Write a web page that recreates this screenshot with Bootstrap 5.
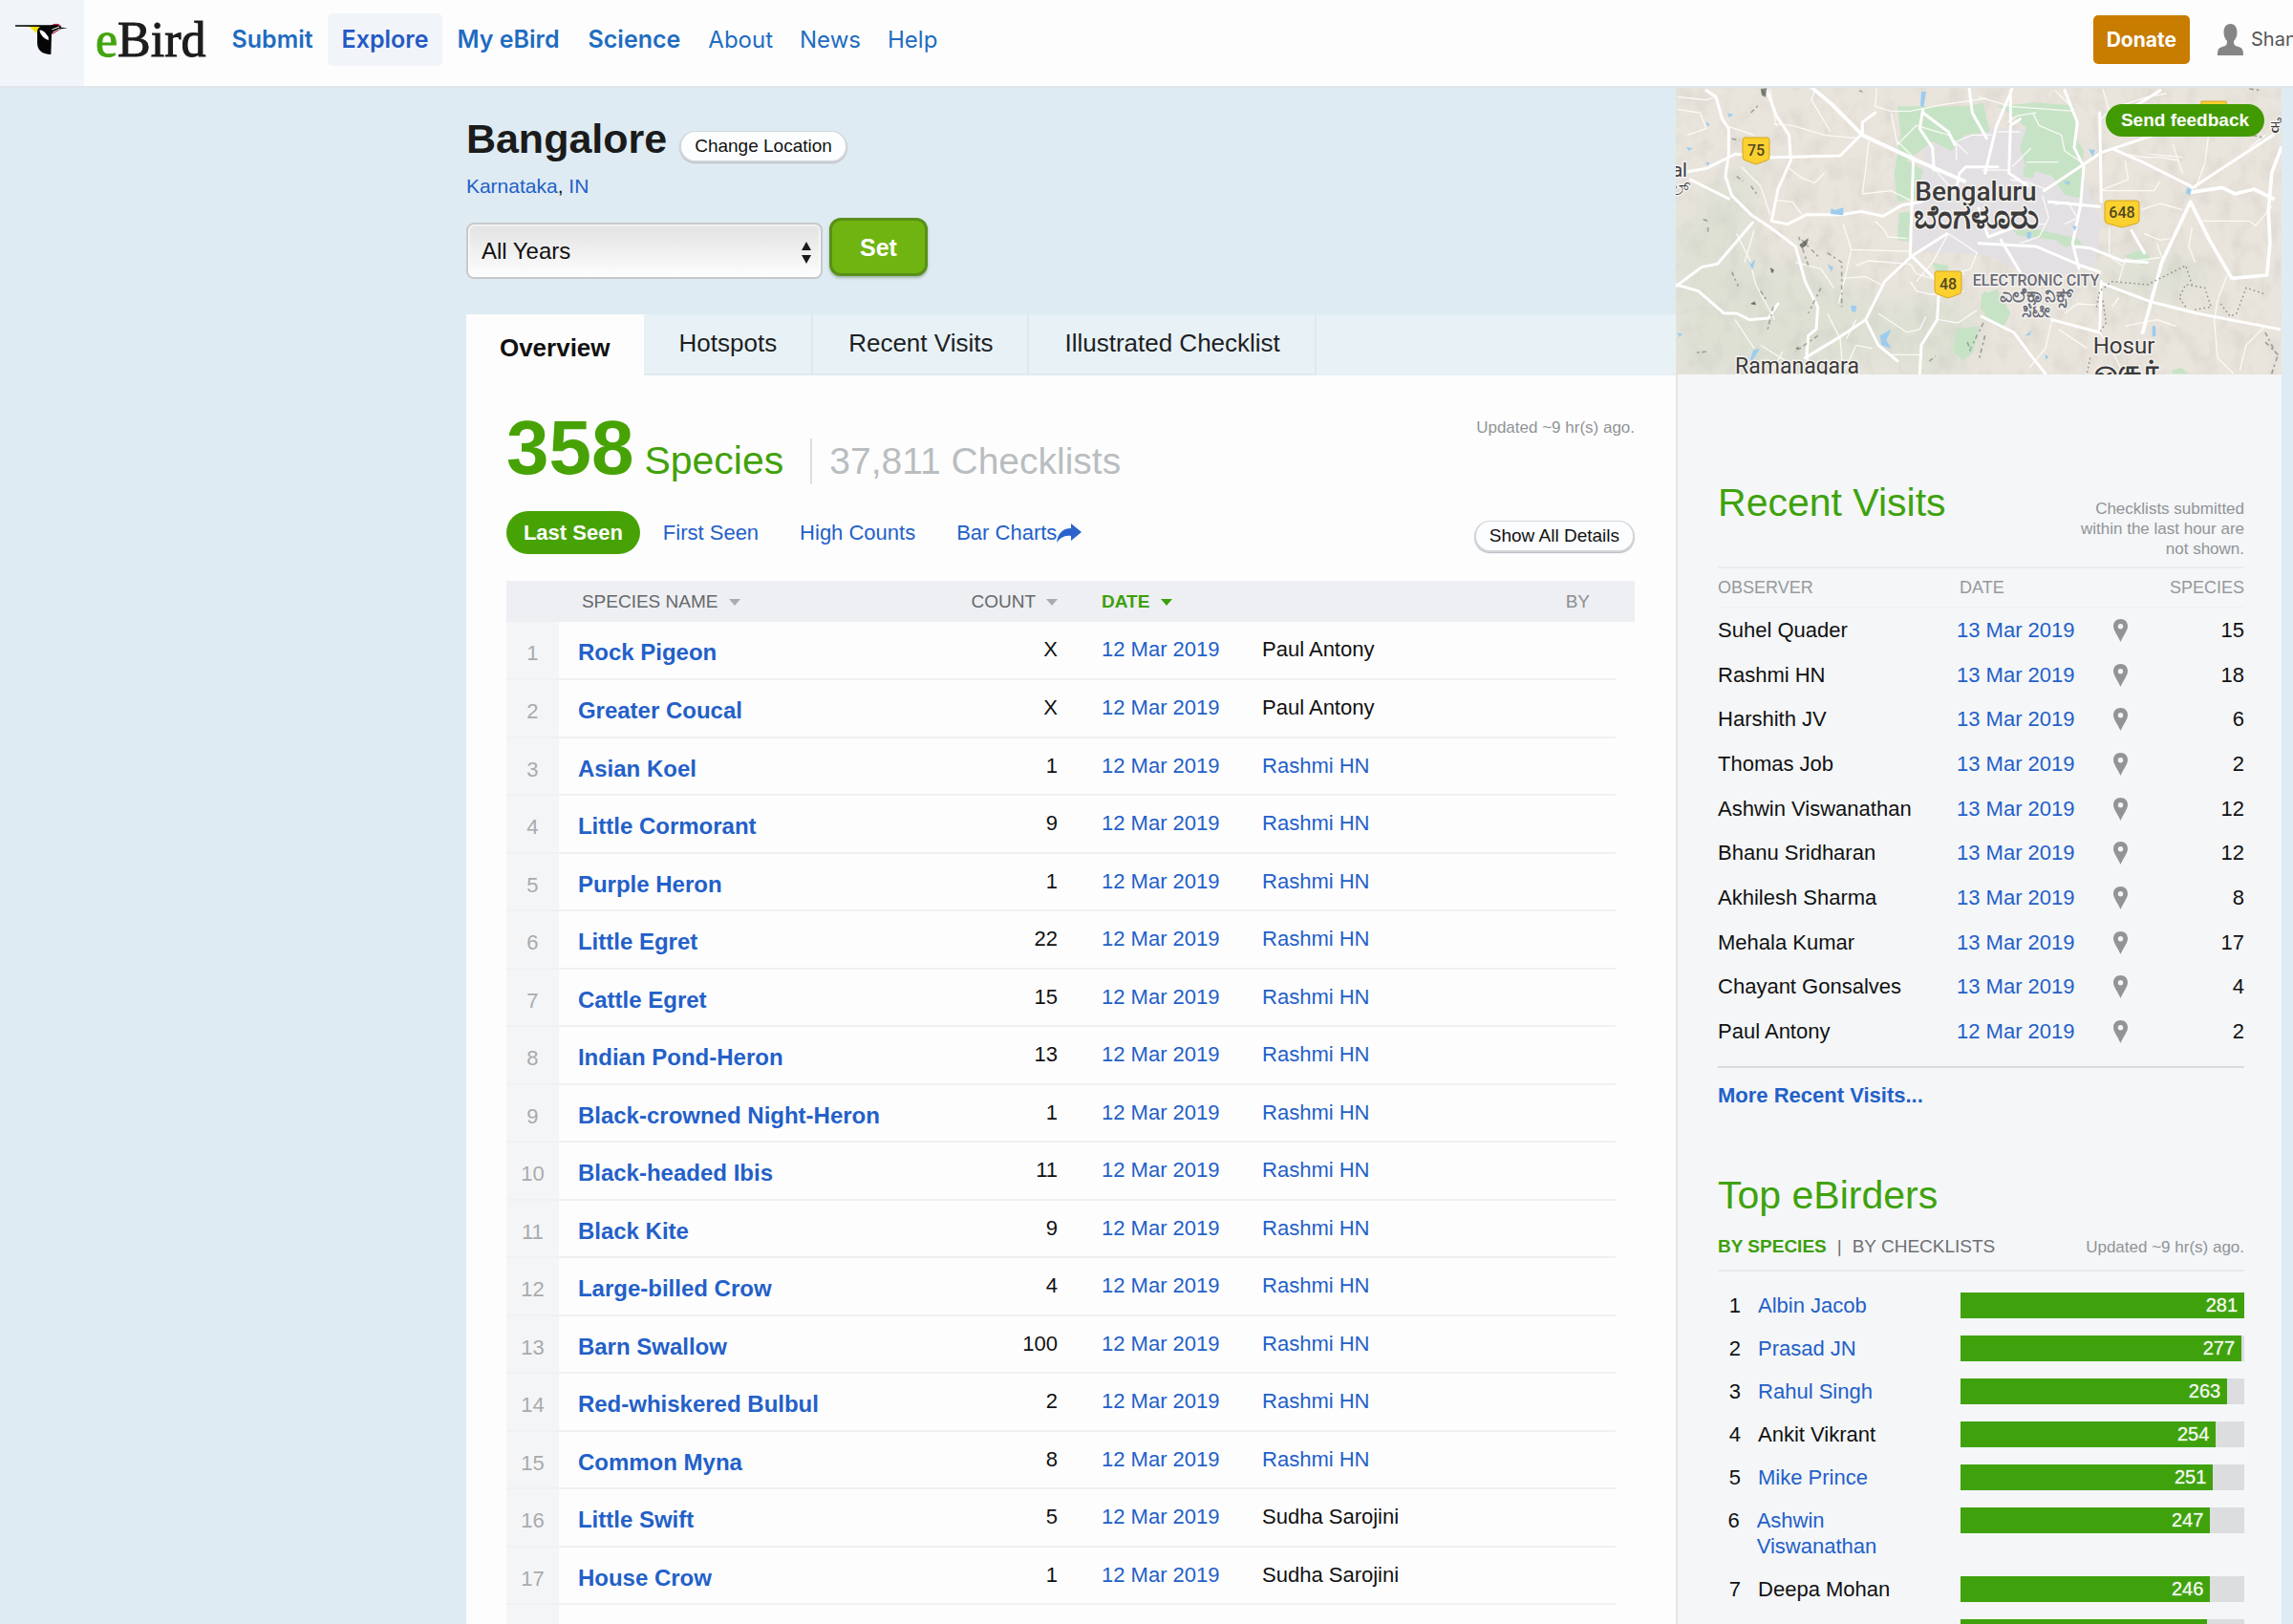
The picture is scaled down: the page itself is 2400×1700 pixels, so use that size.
<!DOCTYPE html>
<html lang="en">
<head>
<meta charset="utf-8">
<meta name="viewport" content="width=device-width, initial-scale=1">
<title>Bangalore - eBird</title>
<link href="https://cdn.jsdelivr.net/npm/bootstrap@5.3.0/dist/css/bootstrap.min.css" rel="stylesheet">
<style>
  body { font-family: "Liberation Sans", Arial, sans-serif; font-size: 22px; line-height: 26px; color: #111; background: #deebf3; height: 100vh; overflow: hidden; }
  a { color: #2360c8; text-decoration: none; }
  a:hover { text-decoration: underline; }

  /* header */
  .site-head { background: #fdfdfe; border-bottom: 2px solid #dfe7ec; font-family: Inter, sans-serif; }
  .lab-logo { width: 88px; background: #f1f4f9; }
  .brand-word { font-family: "Liberation Serif", serif; font-size: 52px; line-height: 55px; color: #1c1c1c; padding: 14px 12px 0 12px; -webkit-text-stroke: 1px currentColor; }
  .brand-word span { color: #43a50e; }
  .main-nav { padding: 14px 0 21px; }
  .main-nav a { font-size: 24px; line-height: 55px; padding: 0 14px; color: #1f6cc0; border-radius: 5px; }
  .main-nav a.strong { font-size: 25px; font-weight: 600; padding: 0 15px; }
  .main-nav a.current { background: #f1f4f9; color: #2459c4; }
  .donate { font-size: 21px; font-weight: 700; line-height: 51px; padding: 0 14px; background: #c87c00; color: #fff; border: 0; border-radius: 5px; margin-top: 16px; }
  .account { width: 79px; margin: 14px 0 0 29px; font-size: 20px; line-height: 55px; color: #555; }

  /* place heading */
  .page-pad { padding: 0 12px 0 20.33%; }
  .place { padding-top: 28px; }
  .place h1 { font-size: 43px; line-height: 50px; font-weight: 700; color: #1b1b1b; margin: 0 13px 0 0; }
  .soft-btn { font-size: 19px; line-height: 30px; padding: 0 14px; color: #111; background: #fcfdfe; border: 2px solid #d3d7da; border-top-width: 1px; border-radius: 17px; box-shadow: 0 1px 1px #b4bac0; }
  .region { font-size: 21px; line-height: 24px; margin-top: 13px; }
  .year-form { gap: 7px; margin: 21px 0 37px; }
  .year-select { width: 373px; height: 59px; margin-top: 5px; font-size: 24px; padding: 0 14px; color: #111; appearance: none; border: 2px solid #c6cacc; border-radius: 8px; background: linear-gradient(#e2e2e2, #fdfdfd); box-shadow: inset 0 0 3px 1px #fff; }
  .year-arrows { right: 11px; top: 25px; pointer-events: none; }
  .set-btn { width: 103px; height: 61px; font-size: 25px; font-weight: 700; color: #fff; background: #70b411; border: 3px solid #58901a; border-radius: 12px; box-shadow: 0 2px 3px #a3b3a8; }
  .place-tabs { background: #e8f2f6; font-size: 26px; line-height: 60px; }
  .place-tabs a { color: #1d2023; padding: 0 36px 0 37px; border-right: 2px solid #dde9ef; border-bottom: 2px solid #e0eaef; }
  .place-tabs a.current { background: #fdfdfe; color: #111; font-weight: 700; line-height: 58px; padding: 6px 33px 0 35px; margin-bottom: -2px; border-color: #fdfdfe; }

  /* overview panel */
  .panel { background: #fdfdfe; padding: 36px 43px 0 42px; }
  .big-num { font-size: 80px; line-height: 80px; font-weight: 700; color: #47a305; }
  .big-label { font-size: 41px; line-height: 48px; color: #42a10a; margin-left: 11px; }
  .checklists { font-size: 39px; line-height: 48px; color: #b9bdbf; border-left: 2px solid #dcdfe1; margin-left: 28px; padding-left: 18px; }
  .fine { font-size: 17px; line-height: 21px; color: #919496; }
  .views { margin-top: 26px; line-height: 45px; }
  .views a { margin-right: 43px; }
  .views a.current { background: #47a305; color: #fff; font-weight: 700; border-radius: 23px; padding: 0 18px; margin-right: 24px; }
  .views .soft-btn { margin-bottom: 2px; }
  .species-table { table-layout: fixed; margin-top: 28px; border-collapse: collapse; width: 100%; }
  .species-table th { font-size: 19px; line-height: 43px; font-weight: 400; color: #65686b; background: #eeeff2; padding: 0; white-space: nowrap; }
  .species-table tbody tr { height: 60px; }
  .species-table tbody tr:nth-child(even) { height: 61px; }
  .species-table td { vertical-align: top; padding: 16px 0 0; border-bottom: 2px solid #eff0f1; white-space: nowrap; }
  .species-table td:last-child { border: 0; }
  .species-table td.rank { padding-top: 20px; text-align: center; color: #a8abad; background: #f4f5f7; border-color: #f0f1f3; }
  .species-table td.bird { padding: 18px 0 0 20px; font-size: 24px; line-height: 28px; font-weight: 700; }
  .species-table .when { padding-left: 46px; }
  .species-table .who { padding-left: 18px; }
  .species-table th.by { padding-right: 27px; color: #8b8e91; text-align: right; }
  th.sorted { color: #3c9f0c !important; font-weight: 700 !important; }
  .caret { display: inline-block; border: 6px solid transparent; border-top: 7px solid #a9acaf; border-bottom: 0; vertical-align: middle; margin-left: 6px; }
  .sorted .caret { border-top-color: #3c9f0c; }

  /* sidebar */
  .side { width: 634px; background: #f4f6f8; }
  .map-view { height: 300px; overflow: hidden; }
  .map-view svg { width: 100%; height: 100%; }
  .feedback { top: 17px; right: 18px; font-size: 19px; line-height: 34px; font-weight: 700; color: #fff; background: #429a02; border: 0; border-radius: 17px; padding: 0 16px; }
  .side-body { border-left: 2px solid #e3e6e9; padding: 110px 39px 0 42px; }
  .side-body h2 { font-size: 41px; line-height: 48px; font-weight: 400; color: #3fa20d; margin: 0; }
  .note { width: 190px; margin-top: 20px; padding-bottom: 8px; }
  .visits { table-layout: fixed; width: 100%; border-top: 2px solid #eaecee; }
  .visits th { font-size: 18px; line-height: 40px; font-weight: 400; color: #96999b; padding: 0; border-bottom: 2px solid #f0f2f4; }
  .visits th.day { padding-left: 3px; }
  .visits td { padding: 0; line-height: 26px; height: 47px; white-space: nowrap; }
  .visits tr:nth-child(3n) td { height: 46px; }
  .more { margin-top: 13px; border-top: 2px solid #d9dcde; padding: 16px 0 67px; }
  .rank-tabs { font-size: 19px; line-height: 24px; margin-top: 18px; padding-bottom: 12px; border-bottom: 2px solid #e8eaec; }
  .rank-tabs a { color: #6d7072; }
  .rank-tabs a.current { color: #3c9f0c; font-weight: 700; }
  .rank-tabs .bar-sep { padding: 0 11px; color: #6d7072; }
  .ranking { margin-top: 22px; line-height: 27px; }
  .ranking li { margin-bottom: 18px; }
  .ranking .pos { width: 24px; margin-right: 18px; }
  .ranking .person { padding-right: 22px; }
  .meter { flex: 0 0 54%; height: 27px; background: #dcdddf; }
  .meter div { height: 27px; background: #3fa20d; color: #fff; font-size: 20px; padding-right: 7px; text-align: right; -webkit-text-stroke: 1px #e4f3dc55; }
</style>
</head>
<body>
<header class="site-head d-flex align-items-start">
  <a class="lab-logo align-self-stretch" href="#" aria-label="Cornell Lab">
    <svg width="88" height="90" viewBox="0 0 264 270">
      <path d="M92 84 L126 84 L116 104 Z" fill="#f3e400"/>
      <path d="M48 79 L160 79 Q182 72 192 86 L212 88 L192 91 L162 106 L160 171 Q118 170 117 135 L117 100 Q118 86 128 84 L48 83 Z" fill="#050505"/>
      <path d="M124 95 Q136 92 152 116 L152 127 Q128 116 124 95 Z" fill="#fff"/>
      <path d="M163 93 L186 84 M166 102 L188 90" stroke="#fff" stroke-width="3"/>
      <path d="M166 78 Q186 72 192 84 M164 107 L184 94" fill="none" stroke="#c4122f" stroke-width="3"/>
    </svg>
  </a>
  <a class="brand-word text-decoration-none" href="#"><span>e</span>Bird</a>
  <nav class="main-nav d-flex">
    <a class="strong" href="#">Submit</a>
    <a class="strong current" href="#">Explore</a>
    <a class="strong" href="#">My eBird</a>
    <a class="strong" href="#">Science</a>
    <a href="#">About</a>
    <a href="#">News</a>
    <a href="#">Help</a>
  </nav>
  <button class="donate ms-auto" type="button">Donate</button>
  <a class="account d-flex align-items-center flex-shrink-0 overflow-hidden" href="#">
    <svg class="flex-shrink-0 me-2" width="27" height="35" viewBox="0 0 27 35"><path d="M13.500 1c5 0 7 4 7 9 0 4-1.500 7-3.500 9 0 4 1 5 5 6 4 1 5 3 5 9H0c0-6 1-8 5-9s5-2 5-6c-2-2-3.500-5-3.500-9 0-5 2-9 7-9z" fill="#858585"/></svg>
    Shan
  </a>
</header>

<div class="page-pad d-flex align-items-stretch">
  <main class="flex-grow-1">
    <div class="place">
      <div class="d-flex align-items-end">
        <h1>Bangalore</h1>
        <button class="soft-btn" type="button">Change Location</button>
      </div>
      <div class="region"><a href="#">Karnataka</a>, <a href="#">IN</a></div>
      <form class="year-form d-flex align-items-start">
        <div class="position-relative">
          <select class="year-select" aria-label="Years"><option>All Years</option></select>
          <svg class="year-arrows position-absolute" width="12" height="23" viewBox="0 0 12 23"><path d="M6 0l5 9H1zM6 23l5-9H1z" fill="#1b1b1b"/></svg>
        </div>
        <button class="set-btn" type="button">Set</button>
      </form>
    </div>
    <nav class="place-tabs d-flex">
      <a class="current" href="#">Overview</a>
      <a href="#">Hotspots</a>
      <a href="#">Recent Visits</a>
      <a href="#">Illustrated Checklist</a>
    </nav>
    <section class="panel">
      <div class="d-flex align-items-baseline">
        <span class="big-num">358</span>
        <span class="big-label">Species</span>
        <span class="checklists">37,811 Checklists</span>
        <span class="fine ms-auto align-self-start mt-2">Updated ~9 hr(s) ago.</span>
      </div>
      <div class="views d-flex align-items-end">
        <a class="current" href="#">Last Seen</a>
        <a href="#">First Seen</a>
        <a href="#">High Counts</a>
        <a href="#" class="d-flex align-items-center">Bar Charts<svg width="26" height="20" viewBox="0 0 26 20"><path d="M15 0l11 9-11 9v-5C8 12 4 15 0 20 1 11 6 5 15 5z" fill="#2a63cb"/></svg></a>
        <button class="soft-btn ms-auto" type="button">Show All Details</button>
      </div>
      <table class="species-table">
        <colgroup><col style="width:55px"><col><col style="width:120px"><col style="width:196px"><col style="width:388px"><col style="width:20px"></colgroup>
        <thead>
          <tr><th></th><th class="ps-4">SPECIES NAME <span class="caret"></span></th><th class="text-end">COUNT <span class="caret"></span></th><th class="when sorted">DATE <span class="caret"></span></th><th class="by">BY</th><th></th></tr>
        </thead>
        <tbody id="species"></tbody>
      </table>
    </section>
  </main>

  <aside class="side flex-shrink-0">
    <div class="map-view position-relative">
      <svg viewBox="0 1 634 300" preserveAspectRatio="xMidYMid slice" role="img" aria-label="Map of Bengaluru">
        <defs>
          <filter id="relief" x="0" y="0" width="100%" height="100%">
            <feTurbulence type="fractalNoise" baseFrequency=".06 .04" numOctaves="4" seed="8"/>
            <feColorMatrix values="0 0 0 0 .35  0 0 0 0 .38  0 0 0 0 .35  1.600 0 0 0 -.72"/>
          </filter>
          <filter id="soften"><feGaussianBlur stdDeviation="14"/></filter>
        </defs>
        <rect width="634" height="302" fill="#e9e4dc"/>
        <g filter="url(#soften)" fill="#dee0d4"><path d="M0 150L90 60 70 180 170 200 230 240 180 302H0z"/><ellipse cx="260" cy="260" rx="60" ry="40"/><ellipse cx="500" cy="200" rx="60" ry="20"/></g>
        <rect width="634" height="302" filter="url(#relief)" opacity=".22"/>
        <!-- western half, drawn on a grid of three units to the pixel -->
        <g transform="translate(-8 -3) scale(.3333)">
          <path d="M800 200l170-60h250l80 140 60 150-20 140-170 50-160-80-240-20-10-120 50-160z" fill="#e2e0e3"/>
          <g fill="#c7e3c6">
            <path d="M720 70h210l60-10 20 90-80 10-40 50-60-30-80 60 50 30-20 90-60 10-10-90 20-120z"/>
            <path d="M725 405l35-5-5 95-35-5zM905 770l70-10-15 80-35 30-30-30zM830 560l50 10v40l-40-20zM990 650l60 20 25 50-20 40-60-30z"/>
          </g>
          <g fill="none" stroke="#fffefb" stroke-width="4" opacity=".85" stroke-linejoin="round">
            <path d="M30 40l90 10 30-10M30 80l70 10 20 50-60 20M330 125l60 5 100 30 100 10M510 150l-60-100 10-30M320 15l20 120M655 10l-5 60 50 15h60l100-20 140-20"/>
            <path d="M180 130l90 30M230 260l60 60 30 90M380 265l40 30 40 15 30-30M630 180l-10 90-10 75 90-10 60 30M700 90l20 100 60-60 100 30 60 60M780 240l-60-60M340 365l50 5 30 40"/>
            <path d="M215 470l40 80 20 80 60 110M240 560l30-100M400 560l80 20 40 60M570 520l190 5M590 570l40-15 130 10 20 30 60 20 90-20M550 610l70-5 50 25M500 720l40 80 10 110M660 720l90 60 40-10 20-40M640 830l-50-10-40 90M590 740l-30 60"/>
            <path d="M760 620l20 30 40 10 30 0 80-10M650 430l30 30 10 20 60 5M550 440l25 80-20 90-20 80M850 740l60 10 60-40M690 850h110M360 840l-40 70M290 820l80 50M210 740l60 90"/>
            <path d="M905 240v-60l50-20h60M880 470l-50 90-50 60M880 470l90 60-20 50-60 20M830 260l80 90"/>
          </g>
          <g fill="none" stroke="#fff" stroke-width="9" stroke-linejoin="round" stroke-linecap="round">
            <path d="M120 20l30 20 20 70 20 30v80l-10 70 20 60 60 60 60 40 80 60 30 110 40 80-5 70-25 20-5 60 10 60"/>
            <path d="M310 20l30 80 40 60 5 80-40 90-20 100 50 10 60-30h110l60-10 70 15 60-35 60-10"/>
            <path d="M60 275l60-10 90-45 120 10 210-5 30-30 40-40V120l40-30"/>
            <path d="M450 10l60 50 100 100 160 75 160 70" stroke-width="12"/>
            <path d="M25 635l80-60 50-10 110-130M25 630l70 20 80 70h40l40 20 60-5 30-45M430 860l100-60 90-60 60-120 85-80 110-70M620 740l40 80 60 50M765 540l70 70M850 650l-5 90-50 80-5 90"/>
            <path d="M770 240l-10 300M800 80l-10 60 40 60 5 70M800 90l80 60 20 40M945 10l10 80 45 80M70 300l120 60M905 330l10-50 20-20h100"/>
          </g>
          <g fill="#9bccf0"><path d="M795 25l15-2-8 50-10-5zM512 390l12 6 26-8v24l-40-4zM665 790l35-20-15 35 15 25-30-10zM250 550l10 15 14-15-10 35zM268 835l20-4-25 40-5-8zM500 565l18 10-5 15zM574 695l18 2-4 20-12-4zM30 780l15 5-10 10zM186 92l18 2-12 12zM118 116l14 12-10 4zM58 198l20 4-14 8zM118 246h12l-6 12z"/></g>
          <g fill="none" stroke="#555b52" stroke-width="5" stroke-dasharray="14 9 7 12" opacity=".45"><path d="M295 20l10 20M260 90l25-25M215 290l20 15M260 320l25 35M110 425l15 5M125 450v20M420 490l20 20 40 40M425 510l15-20M500 530l45 30v140M480 640l-40 80M325 580l5 15M200 590l20 45M262 690h12M330 700l-20 80M290 650l20 30M470 790l-70 50M940 810l10 30M990 750l-40 80M440 570l-30-90M120 840l-40 5M820 870l20-15M600 20l10 5M200 172l24 4"/></g>
          <g fill="#3f443d" opacity=".6"><path d="M290 15l20-2-4 28-12-6zM412 505l28-22-4 22-16 12zM320 575l14 10-10 8zM258 690l14-8 4 12zM400 830l10-6v12z"/></g>
        </g>
        <!-- eastern half, same grid -->
        <g transform="translate(317 -3) scale(.3333)">
          <g fill="#c7e3c6"><path d="M60 70l120-12 120 10 10 110 20 30-10 150-50-10-40-60-80-20-20-70 20-60-60-50zM140 260l40 5-10 30-30-5zM110 460l70-5 130 30 20 20-60 5-30-20-120-15zM455 540l60-20 25 25-25 25-30-20zM10 660l50-15 20 80-30 20-45-40zM605 900l30-10 25 20h-50z"/></g>
          <g fill="none" stroke="#fffefb" stroke-width="4" opacity=".85" stroke-linejoin="round">
            <path d="M0 40l100 30 200 15M300 80l-60-60M170 90l20 40 70 30 10 50 60 40M165 200l-60 60M390 15l20 70-30 30M410 80l120-40 60-10M460 240l10 60-90 35h170l20-30M540 220l100 10"/>
            <path d="M460 220l60 10 50 0 60 10M240 380l40-10 30 50-40 20M700 430h150l20 15 50-60M520 470l50 20 30-5M510 395l60-20 70 20M680 330l30-80 20-150M640 280l-30-90M780 600l-30 80-10 60 10 120 50 50M680 560l-20-50 10-60"/>
            <path d="M440 620l20-70 30 5 80-10M410 450v90l40 30M230 740l-20 90-50 60M270 720l40-30 70 5M420 700l20-30M460 760l100-20 60 20M250 770l90 60M380 780l40 60 30 60M900 760l-60 60-20 80M560 500l20 60M850 200l50-40"/>
            <path d="M90 120l30-20 60-10M60 150h70M100 300l60 10 50 20M80 440h130M200 350l20 70-30 60-60 20M10 270h90M150 245h100"/>
          </g>
          <g fill="none" stroke="#fff" stroke-width="9" stroke-linejoin="round" stroke-linecap="round">
            <path d="M205 335l180-120 240-80 50-60M425 205l90 40 150 75M105 15l-50 120L20 280M100 20l0 100M270 20l40 100-10 80 30 60-10 120-25 120 20 80M380 90l5 280M0 500l180 10 140 60 60 20M300 510l50 5 100 40 80 5M430 90l60-20 80-50M220 370l160 15"/>
            <path d="M665 340l100-15 40 20 60-15 60 30M665 370l60 120 70 120 110-10 10-100-5-100 10-120 30-80M665 370l-90 190-60 220" stroke-width="11"/>
            <path d="M385 625l160 60 140 35 260 50M10 730l100 50 60 80 40 50M230 740l150 40 5-160M70 490l60 100M480 460l40 70M665 330l260-170M0 390l30 90 80-30M130 110l-30 20-5 150 60 40"/>
          </g>
          <g fill="#9bccf0"><path d="M345 205l20 2-6 22zM265 305h20v14zM655 325l14 5-6 20-12-8zM152 465h14l-4 22-10-4zM294 445l14 2-6 14zM545 760h10l2 30-12 4zM145 790l22-15-8 15zM208 850l12 6-8 10zM262 700l16-10-8 14z"/></g>
          <path d="M370 700l10-50 40-30 110 10 60-30 60-30 20 60M650 700l-20-30 20-40 60 10 20 60-60 10M760 690l30 40 20-10 30-80 60 20M390 680l10 70-20 30M350 860l-10 50" fill="none" stroke="#8d8a86" stroke-width="4" stroke-dasharray="5 9"/>
          <path d="M860 160l40 10M850 15l30 4M940 850l-40-40M920 910l20-60M20 790l-20 80M900 780l30 60" fill="none" stroke="#555b52" stroke-width="5" stroke-dasharray="14 9 7 12" opacity=".5"/>
        </g>
        <g fill="#fbd12f" stroke="#d8a51f"><path d="M72 53h24q2 0 2 3v17q0 3-3 4l-11 4-11-4q-3-1-3-4V56q0-3 2-3z"/><path d="M273 193h24q2 0 2 3v17q0 3-3 4l-11 4-11-4q-3-1-3-4v-17q0-3 2-3z"/><path d="M452 119h30q3 0 3 3v17q0 3-3 4l-15 4-15-4q-3-1-3-4v-17q0-3 3-3z"/><path d="M550 15h26v20h-26z"/></g>
        <g font-family="Roboto, sans-serif" text-anchor="middle" fill="#3b3b3b">
          <g font-size="16" font-weight="500" fill="#504823"><text x="84" y="72">75</text><text x="285" y="212">48</text><text x="467" y="137">648</text></g>
          <g stroke="#f4f1ee" stroke-width="3" paint-order="stroke">
            <text x="314" y="119" font-size="28" font-weight="500">Bengaluru</text>
            <text x="314" y="148" font-size="35" font-weight="700">ಬೆಂಗಳೂರು</text>
            <text x="377" y="208" font-size="16" font-weight="500" fill="#686b76">ELECTRONIC CITY</text>
            <text x="377" y="225" font-size="21" font-weight="700" fill="#686b76">ಎಲೆಕ್ಟ್ರಾನಿಕ್ಸ್</text>
            <text x="377" y="241" font-size="20" font-weight="700" fill="#686b76">ಸಿಟೀ</text>
            <text x="127" y="300" font-size="23">Ramanagara</text>
            <text x="469" y="279" font-size="24">Hosur</text>
            <text x="471" y="307" font-size="29" font-weight="700">ஓசூர்</text>
            <text x="4" y="94" font-size="20">al</text>
            <text x="4" y="113" font-size="22">ಲ್</text>
            <text x="628" y="48" font-size="24">ಕೆ</text>
          </g>
        </g>
      </svg>
      <button class="feedback position-absolute" type="button">Send feedback</button>
    </div>
    <div class="side-body">
      <div class="d-flex justify-content-between align-items-start">
        <h2>Recent Visits</h2>
        <div class="fine note text-end">Checklists submitted within the last hour are not shown.</div>
      </div>
      <table class="visits">
        <colgroup><col style="width:250px"><col style="width:148px"><col style="width:44px"><col></colgroup>
        <thead><tr><th>OBSERVER</th><th class="day">DATE</th><th></th><th class="text-end">SPECIES</th></tr></thead>
        <tbody id="visits"></tbody>
      </table>
      <div class="more"><a class="fw-bold" href="#">More Recent Visits...</a></div>
      <h2>Top eBirders</h2>
      <div class="rank-tabs d-flex align-items-center">
        <a class="current" href="#">BY SPECIES</a><span class="bar-sep">|</span><a href="#">BY CHECKLISTS</a>
        <span class="fine ms-auto">Updated ~9 hr(s) ago.</span>
      </div>
      <ol class="ranking list-unstyled" id="ranking"></ol>
    </div>
  </aside>
</div>

<script>
  const species = [
    ["Rock Pigeon", "X", "Paul Antony"], ["Greater Coucal", "X", "Paul Antony"],
    ["Asian Koel", 1], ["Little Cormorant", 9], ["Purple Heron", 1], ["Little Egret", 22],
    ["Cattle Egret", 15], ["Indian Pond-Heron", 13], ["Black-crowned Night-Heron", 1],
    ["Black-headed Ibis", 11], ["Black Kite", 9], ["Large-billed Crow", 4], ["Barn Swallow", 100],
    ["Red-whiskered Bulbul", 2], ["Common Myna", 8],
    ["Little Swift", 5, "Sudha Sarojini"], ["House Crow", 1, "Sudha Sarojini"], ["House Sparrow", 2, "Sudha Sarojini"]
  ];
  document.getElementById("species").innerHTML = species.map(([name, count, by], i) =>
    `<tr><td class="rank">${i + 1}</td><td class="bird"><a href="#">${name}</a></td><td class="text-end">${count}</td>` +
    `<td class="when"><a href="#">12 Mar 2019</a></td><td class="who">${by || '<a href="#">Rashmi HN</a>'}</td><td></td></tr>`).join("");

  const visits = [["Suhel Quader", 15], ["Rashmi HN", 18], ["Harshith JV", 6], ["Thomas Job", 2],
    ["Ashwin Viswanathan", 12], ["Bhanu Sridharan", 12], ["Akhilesh Sharma", 8], ["Mehala Kumar", 17],
    ["Chayant Gonsalves", 4], ["Paul Antony", 2, 12]];
  const pin = '<svg class="d-block" width="15" height="24" viewBox="0 0 15 24"><path fill-rule="evenodd" d="M7.500 0C12 0 15 3 15 7.500 15 12 10 18 7.500 24 5 18 0 12 0 7.500 0 3 3 0 7.500 0zm0 5a2.700 2.700 0 1 0 0 5.400 2.700 2.700 0 0 0 0-5.400z" fill="#929496"/></svg>';
  document.getElementById("visits").innerHTML = visits.map(([name, n, day]) =>
    `<tr><td>${name}</td><td><a href="#">${day || 13} Mar 2019</a></td><td><a href="#" class="d-block ms-3" aria-label="Map">${pin}</a></td><td class="text-end">${n}</td></tr>`).join("");

  const ranking = [["Albin Jacob", 281, 100, 1], ["Prasad JN", 277, 99, 1], ["Rahul Singh", 263, 94, 1],
    ["Ankit Vikrant", 254, 90, 0], ["Mike Prince", 251, 89, 1], ["Ashwin Viswanathan", 247, 88, 1],
    ["Deepa Mohan", 246, 88, 0], ["Prem Rachel", 244, 87, 1]];
  document.getElementById("ranking").innerHTML = ranking.map(([name, n, pct, link], i) =>
    `<li class="d-flex align-items-start"><span class="pos text-end">${i + 1}</span>` +
    `<span class="person flex-grow-1">${link ? `<a href="#">${name}</a>` : name}</span>` +
    `<div class="meter"><div style="width:${pct}%">${n}</div></div></li>`).join("");
</script>
<script src="https://cdn.jsdelivr.net/npm/bootstrap@5.3.0/dist/js/bootstrap.bundle.min.js"></script>
</body>
</html>
